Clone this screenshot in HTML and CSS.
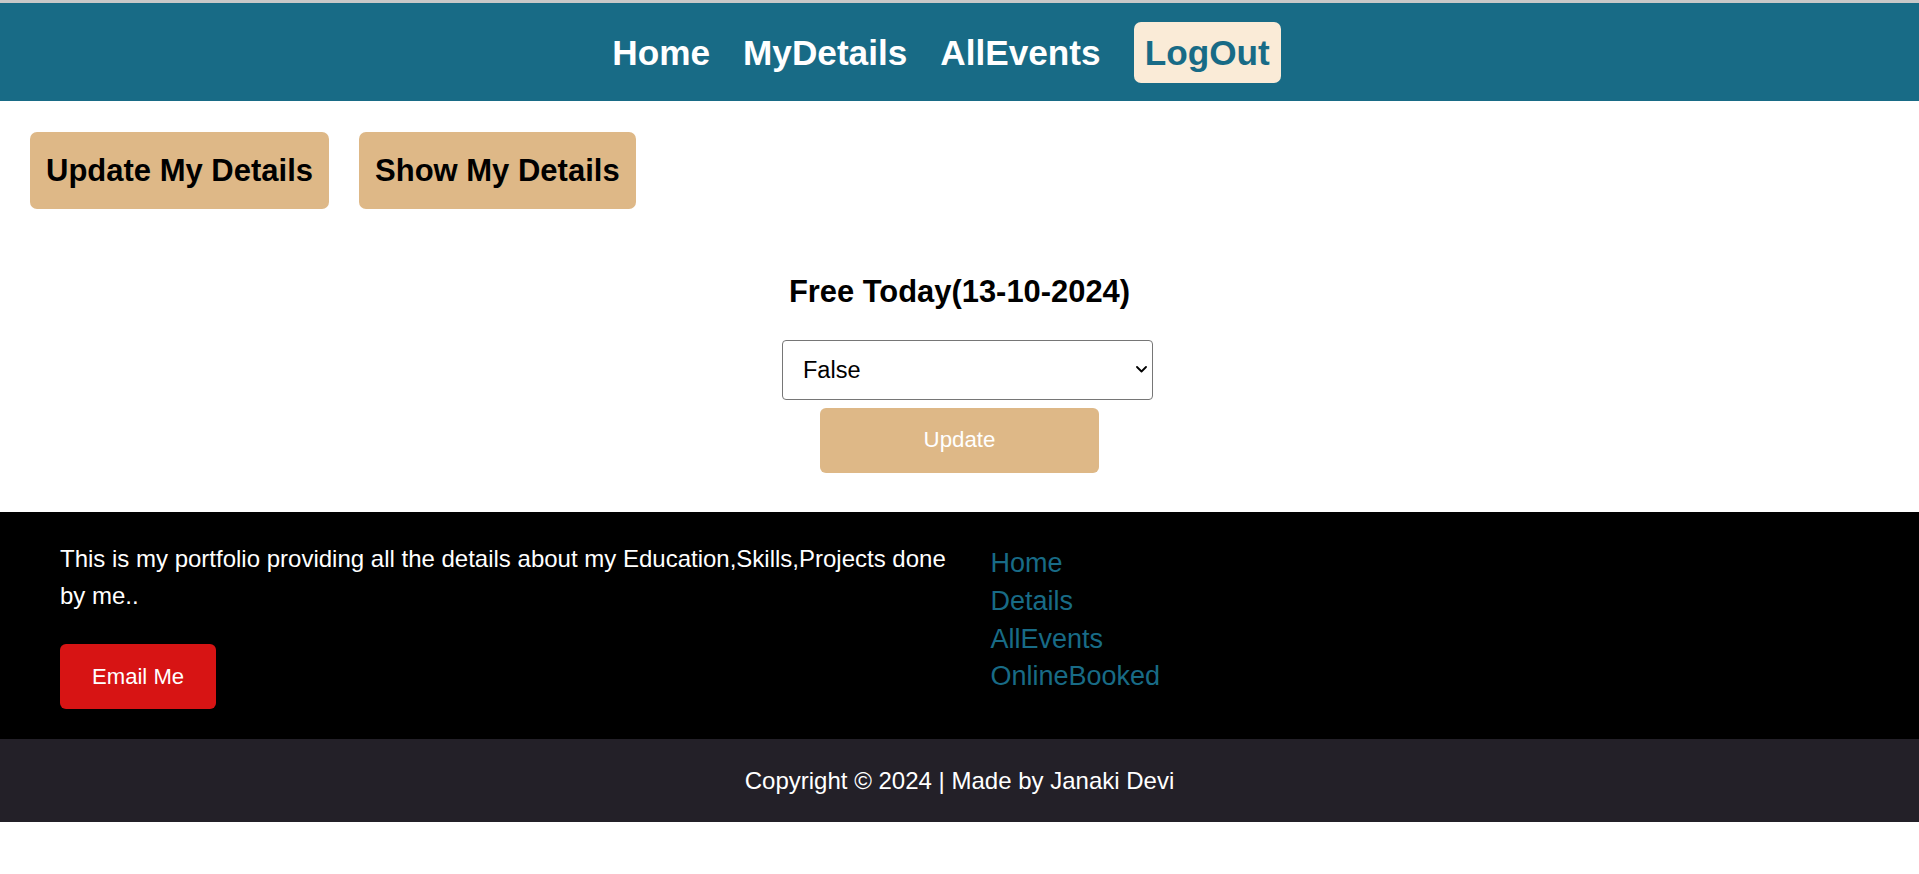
FILE: index.html
```html
<!DOCTYPE html>
<html lang="en">
<head>
<meta charset="utf-8">
<title>My Details</title>
<link rel="stylesheet" href="styles.css">
</head>
<body>
<header class="navbar">
  <nav class="nav-links">
    <a class="nav-link" href="#">Home</a>
    <a class="nav-link" href="#">MyDetails</a>
    <a class="nav-link" href="#">AllEvents</a>
    <a class="nav-link logout" href="#">LogOut</a>
  </nav>
</header>
<main class="content">
  <div class="actions">
    <button class="action-btn">Update My Details</button>
    <button class="action-btn">Show My Details</button>
  </div>
  <section class="status">
    <h2 class="status-title">Free Today(13-10-2024)</h2>
    <div class="select-wrap">
      <select class="status-select">
        <option>False</option>
        <option>True</option>
      </select>
      <svg class="select-arrow" width="11" height="7" viewBox="0 0 11 7" aria-hidden="true">
        <path d="M1 1 L5.5 5.5 L10 1" fill="none" stroke="#000" stroke-width="1.8" stroke-linecap="round" stroke-linejoin="round"/>
      </svg>
    </div>
    <button class="update-btn">Update</button>
  </section>
</main>
<footer class="footer">
  <div class="footer-main">
    <div class="footer-about">
      <p class="footer-text">This is my portfolio providing all the details about my Education,Skills,Projects done by me..</p>
      <button class="email-btn">Email Me</button>
    </div>
    <ul class="footer-links">
      <li><a href="#">Home</a></li>
      <li><a href="#">Details</a></li>
      <li><a href="#">AllEvents</a></li>
      <li><a href="#">OnlineBooked</a></li>
    </ul>
  </div>
  <div class="copyright">Copyright © 2024 | Made by Janaki Devi</div>
</footer>
</body>
</html>
```
FILE: styles.css
```css
* { box-sizing: border-box; }

body {
  margin: 0;
  font-family: "Liberation Sans", Arial, sans-serif;
  background: #ffffff;
  color: #000;
}

.navbar {
  border-top: 3px solid #c8c8c8;
  background: #186b86;
  height: 101px;
  display: flex;
  align-items: center;
  justify-content: center;
  padding-right: 26px;
}

.nav-links {
  display: flex;
  align-items: center;
  gap: 33px;
}

.nav-link {
  color: #ffffff;
  text-decoration: none;
  font-weight: bold;
  font-size: 35.2px;
  line-height: 41px;
}

.nav-link.logout {
  background: antiquewhite;
  color: #186b86;
  padding: 10px 11px;
  border-radius: 7px;
}

.actions {
  display: flex;
  gap: 30px;
  padding: 31px 30px 0;
}

.action-btn {
  font-family: inherit;
  font-weight: bold;
  font-size: 31px;
  line-height: 37px;
  padding: 20px 16px;
  background: #deb887;
  color: #000;
  border: none;
  border-radius: 7px;
}

.status {
  display: flex;
  flex-direction: column;
  align-items: center;
  padding-top: 64.7px;
  padding-bottom: 39px;
}

.status-title {
  margin: 0;
  font-size: 30.9px;
  line-height: 35.3px;
  font-weight: bold;
}

.select-wrap {
  position: relative;
  margin-top: 31px;
  margin-left: 16px;
  width: 371px;
  height: 60px;
}

.status-select {
  appearance: none;
  -webkit-appearance: none;
  display: block;
  width: 100%;
  height: 100%;
  font-family: inherit;
  font-size: 23.5px;
  color: #000;
  background: #fff;
  border: 1px solid #767676;
  border-radius: 4px;
  padding: 0 30px 0 20px;
}

.select-arrow {
  position: absolute;
  right: 6px;
  top: 26px;
  pointer-events: none;
}

.update-btn {
  margin-top: 8px;
  width: 279px;
  height: 65px;
  font-family: inherit;
  font-size: 22.3px;
  color: #ffffff;
  background: #deb887;
  border: none;
  border-radius: 6px;
}

.footer-main {
  background: #000000;
  display: grid;
  grid-template-columns: 1fr 1fr;
  padding: 29px 60px 30px;
}

.footer-text {
  margin: 0;
  color: #ffffff;
  font-size: 24px;
  line-height: 36.7px;
}

.email-btn {
  margin-top: 29.6px;
  font-family: inherit;
  font-size: 22.1px;
  line-height: 25px;
  padding: 20px 32px;
  color: #ffffff;
  background: #d71414;
  border: none;
  border-radius: 6px;
}

.footer-links {
  list-style: none;
  margin: 0;
  padding: 4px 0 0 31px;
}

.footer-links li {
  font-size: 27px;
  line-height: 37.8px;
}

.footer-links a {
  color: #186b86;
  text-decoration: none;
}

.copyright {
  background: #232028;
  color: #ffffff;
  text-align: center;
  font-size: 24px;
  line-height: 27px;
  padding: 28px 0;
}
```
